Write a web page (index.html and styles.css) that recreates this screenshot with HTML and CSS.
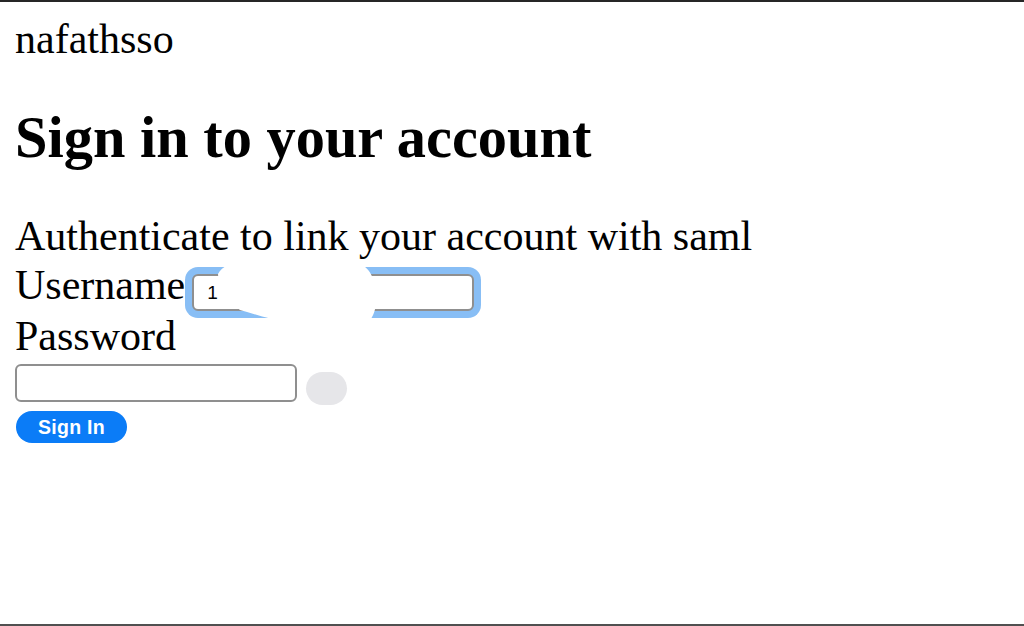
FILE: index.html
```html
<!DOCTYPE html>
<html lang="en">
<head>
<meta charset="utf-8">
<title>Sign in to your account</title>
<link rel="stylesheet" href="styles.css">
</head>
<body>
<div class="page">
  <div class="brand">nafathsso</div>
  <h1 class="title">Sign in to your account</h1>
  <p class="intro">Authenticate to link your account with saml</p>
  <form class="form" onsubmit="return false">
    <div class="row-user">
      <label for="username" class="label">Username</label>
      <span class="field-wrap">
        <input id="username" class="input input-focus" type="text" value="1">
        <svg class="redact" width="175" height="68" viewBox="0 0 175 68" aria-hidden="true">
          <path d="M8 16 C12 8 22 4 35 4 L140 4 C155 4 162 14 165 27 C168 42 166 57 158 64 L80 64 C60 62 45 56 30 52 C18 42 8 30 8 16 Z" fill="#ffffff"/>
        </svg>
      </span>
    </div>
    <label for="password" class="label label-block">Password</label>
    <div class="row-pass">
      <input id="password" class="input" type="password">
      <button type="button" class="reveal" aria-label="Show password"></button>
    </div>
    <button type="submit" class="submit">Sign In</button>
  </form>
</div>
</body>
</html>
```
FILE: styles.css
```css
html, body {
  margin: 0;
  padding: 0;
  background: #ffffff;
}

.page {
  box-sizing: border-box;
  height: 626px;
  border-top: 2px solid #262626;
  border-bottom: 2px solid #505050;
  padding: 13px 15px 0 15px;
  font-family: "Liberation Serif", "Times New Roman", serif;
  color: #000000;
  overflow: hidden;
}

.brand {
  font-size: 42px;
  line-height: 48px;
}

.title {
  margin: 42px 0 0 0;
  font-size: 58.4px;
  line-height: 66px;
  font-weight: bold;
}

.intro {
  margin: 41px 0 0 0;
  font-size: 42px;
  line-height: 48px;
}

.form {
  margin: 0;
}

.label {
  font-size: 42px;
  line-height: 48px;
}

.label-block {
  display: block;
}

.row-user {
  display: flex;
  align-items: flex-start;
  height: 52px;
  padding-top: 1px;
  box-sizing: border-box;
}

.field-wrap {
  position: relative;
  margin-left: 7px;
  margin-top: 13px;
  display: block;
}

.input {
  box-sizing: border-box;
  display: block;
  width: 282px;
  height: 38px;
  margin: 0;
  padding: 0 12px 0 13px;
  border: 2px solid #8f8f8f;
  border-radius: 6px;
  background: #ffffff;
  font-family: "Liberation Sans", Arial, sans-serif;
  font-size: 19px;
  color: #000000;
  outline: none;
}

.input-focus {
  height: 37px;
  box-shadow: 0 0 0 7px #88bef5;
}

.redact {
  position: absolute;
  left: 18px;
  top: -16px;
  display: block;
}

.row-pass {
  display: flex;
  align-items: flex-start;
  margin-top: 4px;
}

.reveal {
  width: 41px;
  height: 33px;
  margin: 8px 0 0 9px;
  padding: 0;
  border: none;
  border-radius: 17px;
  background: #e6e6e9;
}

.submit {
  display: block;
  margin-top: 6px;
  margin-left: 1px;
  width: 111px;
  height: 32px;
  padding: 0;
  border: none;
  border-radius: 16px;
  background: #0b7cf7;
  color: #ffffff;
  font-family: "Liberation Sans", Arial, sans-serif;
  font-weight: bold;
  font-size: 19.5px;
  letter-spacing: 0.3px;
}
```
